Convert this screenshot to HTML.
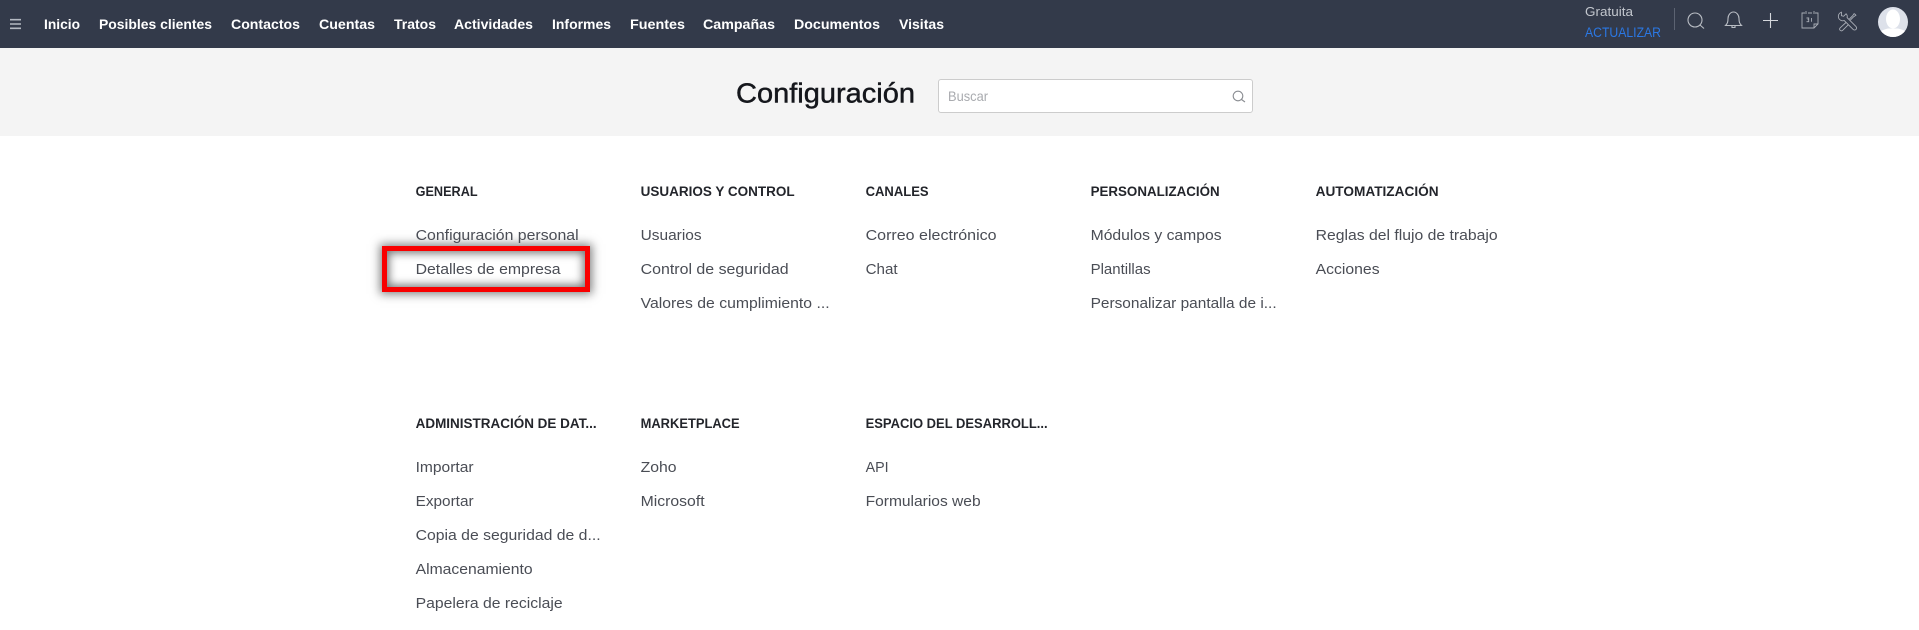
<!DOCTYPE html>
<html lang="es">
<head>
<meta charset="utf-8">
<title>Configuración</title>
<style>
html,body{margin:0;padding:0;background:#fff;width:1919px;height:630px;overflow:hidden}
#bar{position:absolute;left:0;top:0;width:1919px;height:48px;background:#333a4a}
#band{position:absolute;left:0;top:48px;width:1919px;height:88px;background:#f4f4f4}
#search{position:absolute;left:938px;top:79px;width:313px;height:32px;background:#fff;border:1px solid #ccc;border-radius:3px}
#red{position:absolute;left:382px;top:246px;width:198px;height:36px;border:5px solid #f90000;box-shadow:0 0 9px 2px rgba(0,0,0,.5),inset 0 0 9px 2px rgba(0,0,0,.55)}
svg{position:absolute;left:0;top:0}
text{font-family:"Liberation Sans",sans-serif}
.n{font-size:14px;font-weight:700;fill:#fff}
.h{font-size:13.5px;font-weight:700;fill:#23252b;transform:translateX(-.4px)}
.i{font-size:14.5px;fill:#4a4d55;transform:translateX(-.4px)}
</style>
</head>
<body>
<div id="bar"></div>
<div id="band"></div>
<div id="search"></div>
<div id="red"></div>
<svg width="1919" height="630" viewBox="0 0 1919 630">
<!-- hamburger -->
<g stroke="#b4b9c2" stroke-width="1.6">
<path d="M10 19.700H21M10 24H21M10 28.300H21"/>
</g>
<!-- nav -->
<text class="n" x="44" y="29" textLength="36" lengthAdjust="spacingAndGlyphs">Inicio</text>
<text class="n" x="99" y="29" textLength="113" lengthAdjust="spacingAndGlyphs">Posibles clientes</text>
<text class="n" x="231" y="29" textLength="69" lengthAdjust="spacingAndGlyphs">Contactos</text>
<text class="n" x="319" y="29" textLength="56" lengthAdjust="spacingAndGlyphs">Cuentas</text>
<text class="n" x="394" y="29" textLength="42" lengthAdjust="spacingAndGlyphs">Tratos</text>
<text class="n" x="454" y="29" textLength="79" lengthAdjust="spacingAndGlyphs">Actividades</text>
<text class="n" x="552" y="29" textLength="59" lengthAdjust="spacingAndGlyphs">Informes</text>
<text class="n" x="630" y="29" textLength="55" lengthAdjust="spacingAndGlyphs">Fuentes</text>
<text class="n" x="703" y="29" textLength="72" lengthAdjust="spacingAndGlyphs">Campañas</text>
<text class="n" x="794" y="29" textLength="86" lengthAdjust="spacingAndGlyphs">Documentos</text>
<text class="n" x="899" y="29" textLength="45" lengthAdjust="spacingAndGlyphs">Visitas</text>
<!-- right side -->
<text x="1585" y="16" font-size="13" fill="#c3c7ce" textLength="48" lengthAdjust="spacingAndGlyphs">Gratuita</text>
<text x="1585" y="37" font-size="13.5" fill="#2b78e4" textLength="76" lengthAdjust="spacingAndGlyphs">ACTUALIZAR</text>
<path d="M1674.500 8V30" stroke="#5c6372" stroke-width="1"/>
<g fill="none" stroke="#b9bdc4" stroke-width="1.100">
<circle cx="1695" cy="20" r="7"/>
<path d="M1700 25L1704 28.500"/>
<path d="M1725.500 25.500c2-2 2.500-3.500 2.500-7 0-3.500 2.500-6.500 5.500-6.500s5.500 3 5.500 6.500c0 3.500.5 5 2.500 7z"/>
<path d="M1732 26v1.500h3V26"/>
<path d="M1763 20.500H1778M1770.500 13V28" stroke="#d5d7dc"/>
</g>
<g fill="none" stroke="#a9adb6" stroke-width=".9">
<path d="M1805 13h-3v15h12l4-4V13h-3M1808 13h4"/>
<path d="M1806 11v3M1814 11v3M1814 28v-4h4"/>
<path d="M1806.500 18h2.200v1.700h-1.200h1.200v2h-2.200M1811.500 18v3.700"/>
<path d="M1841.500 12.200C1838.900 13 1837.700 15.500 1838.600 18C1839.400 20.200 1841.900 21.300 1844.200 20.500L1853 29.300C1853.900 30.200 1855.200 30.200 1856 29.400S1856.800 27.300 1855.900 26.400L1847.100 17.600C1847.500 16.200 1847.100 14.800 1846.100 13.800L1843.600 16.300L1841.400 15.700Z"/>
<path d="M1854.200 13.500l1.700 1.700-2.200 1.500-3.300 3.300M1854.200 13.500l-1.500 2.200-3.300 3.300"/>
<path d="M1846 22.500l-5.800 5.300c-.8.8-.8 1.800 0 2.500s1.800.7 2.500 0l5.500-5.500"/>
</g>
<!-- avatar -->
<circle cx="1893" cy="22" r="15" fill="#dde1ea"/>
<clipPath id="av"><circle cx="1893" cy="22" r="15"/></clipPath>
<g clip-path="url(#av)" fill="#fff">
<ellipse cx="1893" cy="19" rx="7" ry="9.500"/>
<path d="M1876 38c1-6 6-8 12-9.500h10c6 1.500 11 3.500 12 9.500z"/>
</g>
<!-- header -->
<text x="736" y="102.500" font-size="28" fill="#15171c" stroke="#15171c" stroke-width=".45" textLength="179" lengthAdjust="spacingAndGlyphs">Configuración</text>
<text x="948" y="101" font-size="14" fill="#a9abaf" textLength="40" lengthAdjust="spacingAndGlyphs">Buscar</text>
<g fill="none" stroke="#8a8d92" stroke-width="1.100">
<circle cx="1238" cy="96" r="4.800"/>
<path d="M1241.500 99.500L1245 102"/>
</g>
<!-- row 1 headings -->
<text class="h" x="416" y="196" textLength="62" lengthAdjust="spacingAndGlyphs">GENERAL</text>
<text class="h" x="641" y="196" textLength="154" lengthAdjust="spacingAndGlyphs">USUARIOS Y CONTROL</text>
<text class="h" x="866" y="196" textLength="63" lengthAdjust="spacingAndGlyphs">CANALES</text>
<text class="h" x="1091" y="196" textLength="129" lengthAdjust="spacingAndGlyphs">PERSONALIZACIÓN</text>
<text class="h" x="1316" y="196" textLength="123" lengthAdjust="spacingAndGlyphs">AUTOMATIZACIÓN</text>
<!-- row 1 items -->
<text class="i" x="416" y="240" textLength="163" lengthAdjust="spacingAndGlyphs">Configuración personal</text>
<text class="i" x="416" y="274" textLength="145" lengthAdjust="spacingAndGlyphs">Detalles de empresa</text>
<text class="i" x="641" y="240" textLength="61" lengthAdjust="spacingAndGlyphs">Usuarios</text>
<text class="i" x="641" y="274" textLength="148" lengthAdjust="spacingAndGlyphs">Control de seguridad</text>
<text class="i" x="641" y="308" textLength="189" lengthAdjust="spacingAndGlyphs">Valores de cumplimiento ...</text>
<text class="i" x="866" y="240" textLength="131" lengthAdjust="spacingAndGlyphs">Correo electrónico</text>
<text class="i" x="866" y="274" textLength="32" lengthAdjust="spacingAndGlyphs">Chat</text>
<text class="i" x="1091" y="240" textLength="131" lengthAdjust="spacingAndGlyphs">Módulos y campos</text>
<text class="i" x="1091" y="274" textLength="60" lengthAdjust="spacingAndGlyphs">Plantillas</text>
<text class="i" x="1091" y="308" textLength="186" lengthAdjust="spacingAndGlyphs">Personalizar pantalla de i...</text>
<text class="i" x="1316" y="240" textLength="182" lengthAdjust="spacingAndGlyphs">Reglas del flujo de trabajo</text>
<text class="i" x="1316" y="274" textLength="64" lengthAdjust="spacingAndGlyphs">Acciones</text>
<!-- row 2 headings -->
<text class="h" x="416" y="428" textLength="181" lengthAdjust="spacingAndGlyphs">ADMINISTRACIÓN DE DAT...</text>
<text class="h" x="641" y="428" textLength="99" lengthAdjust="spacingAndGlyphs">MARKETPLACE</text>
<text class="h" x="866" y="428" textLength="182" lengthAdjust="spacingAndGlyphs">ESPACIO DEL DESARROLL...</text>
<!-- row 2 items -->
<text class="i" x="416" y="472" textLength="58" lengthAdjust="spacingAndGlyphs">Importar</text>
<text class="i" x="416" y="506" textLength="58" lengthAdjust="spacingAndGlyphs">Exportar</text>
<text class="i" x="416" y="540" textLength="185" lengthAdjust="spacingAndGlyphs">Copia de seguridad de d...</text>
<text class="i" x="416" y="574" textLength="117" lengthAdjust="spacingAndGlyphs">Almacenamiento</text>
<text class="i" x="416" y="608" textLength="147" lengthAdjust="spacingAndGlyphs">Papelera de reciclaje</text>
<text class="i" x="641" y="472" textLength="36" lengthAdjust="spacingAndGlyphs">Zoho</text>
<text class="i" x="641" y="506" textLength="64" lengthAdjust="spacingAndGlyphs">Microsoft</text>
<text class="i" x="866" y="472" textLength="23" lengthAdjust="spacingAndGlyphs">API</text>
<text class="i" x="866" y="506" textLength="115" lengthAdjust="spacingAndGlyphs">Formularios web</text>
</svg>
</body>
</html>
